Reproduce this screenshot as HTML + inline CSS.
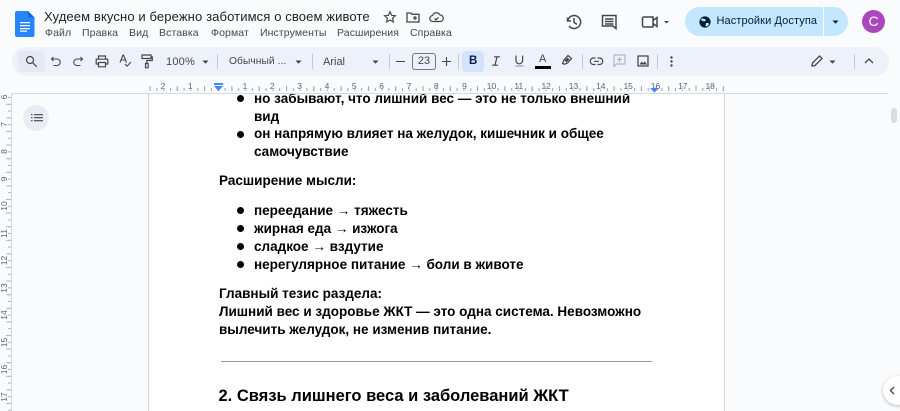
<!DOCTYPE html>
<html><head><meta charset="utf-8">
<style>
html,body{margin:0;padding:0;background:#f9fbfd}
#w{position:relative;width:900px;height:411px;overflow:hidden;background:#f9fbfd;font-family:"Liberation Sans",sans-serif}
.t{position:absolute;white-space:nowrap;line-height:1}
.m{font-size:10.5px;color:#444746;top:28px;letter-spacing:.1px}
.tb{font-size:11px;color:#444746;top:57px}
.d{font-size:13.52px;font-weight:bold;color:#000;left:219px}
.l{left:254px}
.b{position:absolute;left:237px;width:7px;height:7px;border-radius:50%;background:#000}
svg{position:absolute;overflow:visible}
.i{fill:none;stroke:#444746;stroke-width:1.4}
.f{fill:#444746}
.s{position:absolute;top:54px;width:1px;height:15px;background:#c7c7c7}
</style></head><body><div id="w">

<!-- docs logo -->
<svg style="left:15px;top:11px" width="20" height="26" viewBox="0 0 20 26">
<path d="M2 0H13L19.5 6.500V24a2 2 0 0 1-2 2H2a2 2 0 0 1-2-2V2a2 2 0 0 1 2-2z" fill="#2684fc"/>
<path d="M13 0L19.500 6.500H14a1 1 0 0 1-1-1z" fill="#1a66d8"/>
<path d="M5 11.500h10v1.300H5zM5 14.500h10v1.300H5zM5 17.500h10v1.300H5zM5 20h7v1.300H5z" fill="#fff" transform="translate(0,-.5)"/>
</svg>
<div class="t" style="left:44px;top:10px;font-size:13.05px;color:#1f1f1f;letter-spacing:.1px">Худеем вкусно и бережно заботимся о своем животе</div>
<svg style="left:383px;top:10px" width="14" height="14" viewBox="0 0 14 14"><path class="i" style="stroke-width:1.200" d="M7 1.800l1.600 3.500 3.800.4-2.800 2.500.8 3.700L7 10l-3.400 1.900.8-3.700L1.600 5.700l3.800-.4z"/></svg>
<svg style="left:406px;top:11px" width="14" height="12" viewBox="0 0 14 12"><path class="i" style="stroke-width:1.300" d="M1 2h4l1 1.300h7V11H1zM7 7h4M9 5v4"/></svg>
<svg style="left:429px;top:11px" width="15" height="12" viewBox="0 0 15 12"><path class="i" style="stroke-width:1.200" d="M4 10.500a3 3 0 0 1-.4-6A4 4 0 0 1 11 4a3.200 3.200 0 0 1 .2 6.500zM5.500 7.500l1.500 1.400 2.500-2.600"/></svg>
<div class="t m" style="left:45px">Файл</div>
<div class="t m" style="left:82px">Правка</div>
<div class="t m" style="left:129px">Вид</div>
<div class="t m" style="left:159px">Вставка</div>
<div class="t m" style="left:211px">Формат</div>
<div class="t m" style="left:260px">Инструменты</div>
<div class="t m" style="left:337px">Расширения</div>
<div class="t m" style="left:410px">Справка</div>

<!-- right header -->
<svg style="left:565px;top:13px" width="18" height="18" viewBox="0 0 18 18"><path class="i" style="stroke-width:1.500" d="M2.500 4.500V8h3.500M2.700 8A6.500 6.500 0 1 1 4 13M9 5v4.500l3 1.800"/></svg>
<svg style="left:601px;top:14px" width="17" height="17" viewBox="0 0 17 17"><path class="i" style="stroke-width:1.500" d="M1.500 1.500h13.500v13l-3-2.500H1.500zM4 5h8.500M4 7.500h8.500M4 10h8.500"/></svg>
<svg style="left:641px;top:15px" width="30" height="14" viewBox="0 0 30 14"><path class="i" style="stroke-width:1.500" d="M3 2h9v10H3a1.500 1.500 0 0 1-1.500-1.500v-7A1.500 1.500 0 0 1 3 2zM12 5.500l4-3v9l-4-3z"/><path class="f" d="M23 6h5l-2.500 2.500z"/></svg>
<div style="position:absolute;left:685px;top:7px;width:163px;height:29px;border-radius:15px;background:#c2e7ff"></div>
<div style="position:absolute;left:823px;top:7px;width:1px;height:29px;background:#f9fbfd"></div>
<svg style="left:699px;top:16px" width="12" height="12" viewBox="0 0 12 12"><circle cx="6" cy="6" r="5.600" fill="#001d35"/><path d="M3 2.500l3 .5 1 1.500-2 1-1-.5L1.500 4zM7 7l2.500 0 .5 1.500-2 2L6.500 10z" fill="#c2e7ff"/></svg>
<div class="t" style="left:716.500px;top:16px;font-size:11px;color:#001d35;letter-spacing:.1px">Настройки Доступа</div>
<svg style="left:832px;top:20px" width="8" height="5" viewBox="0 0 8 5"><path d="M.5.500h6L3.500 3.800z" fill="#001d35"/></svg>
<div style="position:absolute;left:862px;top:10px;width:23px;height:23px;border-radius:50%;background:#ab47bc;color:#fff;font-size:14px;line-height:23px;text-align:center">C</div>

<!-- toolbar -->
<div style="position:absolute;left:12px;top:47px;width:877px;height:29px;border-radius:15px;background:#edf2fa"></div>
<div style="position:absolute;left:18px;top:51px;width:27px;height:21px;background:#e4e9f3;border-radius:3px"></div>
<svg style="left:25px;top:55px" width="13" height="13" viewBox="0 0 13 13"><circle class="i" cx="5" cy="5" r="3.500" style="stroke-width:1.200"/><path class="i" d="M7.800 7.800l4 4" style="stroke-width:1.200"/></svg>
<svg style="left:50px;top:56px" width="12" height="12" viewBox="0 0 12 12"><path class="i" style="stroke-width:1.100" d="M3.500 1L1.500 3l2 2M1.500 3H7a3 3 0 0 1 0 6.500H3.500"/></svg>
<svg style="left:72px;top:56px" width="12" height="12" viewBox="0 0 12 12"><path class="i" style="stroke-width:1.100" d="M8.500 1l2 2-2 2M10.500 3H5a3 3 0 0 0 0 6.500h3.500"/></svg>
<svg style="left:95px;top:55px" width="14" height="13" viewBox="0 0 14 13"><path class="i" style="stroke-width:1.200" d="M3.500 4V1h7v3M3.500 9H1.200V4.200h11.600V9h-2.300M3.500 7.500h7v4.300h-7z"/></svg>
<svg style="left:119px;top:54px" width="13" height="14" viewBox="0 0 13 14"><path class="i" style="stroke-width:1.100" d="M1 8.500L4 1h.5l3 7.500M2 6h5M6 10l2 2.200 4-4.200"/></svg>
<svg style="left:141px;top:54px" width="12" height="15" viewBox="0 0 12 15"><path class="i" style="stroke-width:1.200" d="M1 1h9v3.500H1zM10 3h1.300v3.500H5.800v3M4.500 9.500h2.600v4.300H4.500z"/></svg>
<div class="t tb" style="left:166px;font-size:11px;letter-spacing:.2px">100%</div>
<svg style="left:202px;top:60px" width="8" height="5"><path class="f" d="M.5.500h6L3.500 3.800z"/></svg>
<div class="s" style="left:217px"></div>
<div class="t tb" style="left:229px;font-size:10.200px;letter-spacing:.1px">Обычный ...</div>
<svg style="left:295px;top:60px" width="8" height="5"><path class="f" d="M.5.500h6L3.500 3.800z"/></svg>
<div class="s" style="left:312px"></div>
<div class="t tb" style="left:323px;font-size:11px">Arial</div>
<svg style="left:372px;top:60px" width="8" height="5"><path class="f" d="M.5.500h6L3.500 3.800z"/></svg>
<div class="s" style="left:389px"></div>
<div style="position:absolute;left:396px;top:61px;width:9px;height:1px;background:#444746"></div>
<div style="position:absolute;left:412px;top:53px;width:24px;height:17px;box-sizing:border-box;border:1px solid #747775;border-radius:3px;color:#444746;font-size:11px;line-height:15px;text-align:center">23</div>
<svg style="left:442px;top:57px" width="9" height="9"><path d="M0 4.500h9M4.500 0v9" stroke="#444746" stroke-width="1.100"/></svg>
<div class="s" style="left:458px"></div>
<div style="position:absolute;left:462px;top:51px;width:22px;height:21px;border-radius:4px;background:#d3e3fd"></div>
<div class="t" style="left:469px;top:56px;font-size:11.500px;font-weight:bold;color:#041e49">B</div>
<svg style="left:492px;top:56px" width="8" height="10" viewBox="0 0 8 10"><path class="i" style="stroke-width:1.200" d="M2 .8h6M0 9.200h6M5 .8L3 9.200"/></svg>
<svg style="left:515px;top:55px" width="9" height="12" viewBox="0 0 9 12"><path class="i" style="stroke-width:1.200" d="M1 .5V5.500a3.300 3.300 0 0 0 6.600 0V.5"/><path d="M.5 11h8" stroke="#8a8c8f" stroke-width="1"/></svg>
<div class="t" style="left:539px;top:54px;font-size:11px;color:#444746">A</div>
<div style="position:absolute;left:535px;top:66px;width:16px;height:2.500px;background:#000"></div>
<svg style="left:561px;top:54px" width="13" height="12" viewBox="0 0 13 12"><path class="i" style="stroke-width:1.200" d="M1.500 9.500L3 6l4-4.500 3.500 3L6.500 9l-3 1.200z"/><path class="f" d="M3.500 6.500l3-3 2 2-3 3z"/></svg>
<div class="s" style="left:582px"></div>
<svg style="left:590px;top:57px" width="13" height="9" viewBox="0 0 13 9"><path class="i" style="stroke-width:1.200" d="M5.500 1H3.500a3 3 0 0 0 0 6.500h2M7.500 1h2a3 3 0 0 1 0 6.500h-2M4 4.300h5"/></svg>
<svg style="left:613px;top:54px" width="13" height="14" viewBox="0 0 13 14"><path d="M1 1h11v9H3.500L1 12.500zM6.500 3v5M4 5.500h5" fill="none" stroke="#b4b8bc" stroke-width="1.200"/></svg>
<svg style="left:637px;top:55px" width="12" height="12" viewBox="0 0 12 12"><path class="i" style="stroke-width:1.300" d="M1 1h10v10H1z"/><path class="f" d="M2.500 9.500l2.200-3 1.500 1.800 1.500-2 2.300 3.200z"/></svg>
<div class="s" style="left:657px"></div>
<svg style="left:670px;top:56px" width="3" height="11"><circle class="f" cx="1.500" cy="1.500" r="1.200"/><circle class="f" cx="1.500" cy="5.500" r="1.200"/><circle class="f" cx="1.500" cy="9.500" r="1.200"/></svg>
<svg style="left:811px;top:55px" width="12" height="12" viewBox="0 0 12 12"><path class="i" style="stroke-width:1.300" d="M1 11l.5-3L8.500 1l2.500 2.500L4 10.500z"/></svg>
<svg style="left:829px;top:60px" width="8" height="5"><path class="f" d="M.5.500h6L3.500 3.800z"/></svg>
<div class="s" style="left:854px"></div>
<svg style="left:864px;top:58px" width="10" height="6"><path class="i" style="stroke-width:1.300" d="M1 5l4-4 4 4"/></svg>

<!-- page -->
<div style="position:absolute;left:148px;top:93px;width:577px;height:318px;background:#fff;border-left:1px solid #d0d1d3;border-right:1.500px solid #d5d7da;box-sizing:border-box"></div>

<!-- horizontal ruler -->
<svg style="left:0;top:0" width="900" height="411">
<defs>
<pattern id="hr" x="149.500" y="0" width="6.825" height="411" patternUnits="userSpaceOnUse"><rect x="0" y="88" width="1" height="3" fill="#a0a3a6"/></pattern>
<pattern id="hr2" x="149.500" y="0" width="13.650" height="411" patternUnits="userSpaceOnUse"><rect x="0" y="86" width="1" height="5" fill="#a0a3a6"/></pattern>
<pattern id="vr" x="0" y="97" width="411" height="6.800" patternUnits="userSpaceOnUse"><rect x="8" y="0" width="3" height="1" fill="#b4b6b9"/></pattern>
<pattern id="vr2" x="0" y="103.800" width="411" height="13.600" patternUnits="userSpaceOnUse"><rect x="6" y="0" width="5" height="1" fill="#b4b6b9"/></pattern>
</defs>
<rect x="149" y="84" width="576" height="8" fill="url(#hr)"/>
<rect x="149" y="84" width="576" height="8" fill="url(#hr2)"/>
<rect x="0" y="94" width="12" height="317" fill="url(#vr)"/>
<rect x="0" y="94" width="12" height="317" fill="url(#vr2)"/>
<rect x="11" y="93" width="877" height="1" fill="#d5d8dc"/>
<rect x="11" y="93" width="1" height="318" fill="#d5d8dc"/>
<g font-family="Liberation Sans, sans-serif" font-size="8.500" fill="#5f6368" text-anchor="middle" style="paint-order:stroke" stroke="#f9fbfd" stroke-width="1.500">
<text x="163" y="89">2</text><text x="190.300" y="89">1</text><text x="245" y="89">1</text><text x="272.300" y="89">2</text><text x="299.600" y="89">3</text><text x="327" y="89">4</text><text x="354.300" y="89">5</text><text x="381.600" y="89">6</text><text x="409" y="89">7</text><text x="436.300" y="89">8</text><text x="464.500" y="89">9</text><text x="491.500" y="89">10</text><text x="518.800" y="89">11</text><text x="546.200" y="89">12</text><text x="573.500" y="89">13</text><text x="600.800" y="89">14</text><text x="628.200" y="89">15</text><text x="655.500" y="89">16</text><text x="682.800" y="89">17</text><text x="710.200" y="89">18</text>
</g>
<path d="M214 83h9v2h-9zM214 86h9l-4.500 5z" fill="#4285f4"/>
<path d="M650 88h9l-4.500 4.500z" fill="#4285f4"/>
<g font-family="Liberation Sans, sans-serif" font-size="8.500" fill="#5f6368" text-anchor="middle" style="paint-order:stroke" stroke="#f9fbfd" stroke-width="1.500">
<text transform="translate(7,97) rotate(-90)">6</text><text transform="translate(7,124.500) rotate(-90)">7</text><text transform="translate(7,151.500) rotate(-90)">8</text><text transform="translate(7,179) rotate(-90)">9</text><text transform="translate(7,206) rotate(-90)">10</text><text transform="translate(7,233.500) rotate(-90)">11</text><text transform="translate(7,260.500) rotate(-90)">12</text><text transform="translate(7,288) rotate(-90)">13</text><text transform="translate(7,315) rotate(-90)">14</text><text transform="translate(7,342.500) rotate(-90)">15</text><text transform="translate(7,369.500) rotate(-90)">16</text><text transform="translate(7,397) rotate(-90)">17</text>
</g>
</svg>

<!-- outline button -->
<div style="position:absolute;left:23px;top:105px;width:26px;height:26px;border-radius:50%;background:#e8edf4"></div>
<svg style="left:31px;top:114px" width="12" height="8"><path d="M0 .7h1.500M3 .7h9M0 3.700h1.500M3 3.700h9M0 6.700h1.500M3 6.700h9" stroke="#444746" stroke-width="1.100"/></svg>

<!-- document text (clipped at top) -->
<div style="position:absolute;left:0;top:94px;width:900px;height:317px;overflow:hidden">
<div style="position:absolute;left:0;top:-94px;width:900px;height:411px">
<div class="b" style="top:95px"></div>
<div class="t d l" style="top:92px">но забывают, что лишний вес — это не только внешний</div>
<div class="t d l" style="top:110px">вид</div>
<div class="b" style="top:131px"></div>
<div class="t d l" style="top:127px">он напрямую влияет на желудок, кишечник и общее</div>
<div class="t d l" style="top:145px">самочувствие</div>
<div class="t d" style="top:174px">Расширение мысли:</div>
<div class="b" style="top:207px"></div>
<div class="t d l" style="top:204px">переедание → тяжесть</div>
<div class="b" style="top:225px"></div>
<div class="t d l" style="top:222px">жирная еда → изжога</div>
<div class="b" style="top:243px"></div>
<div class="t d l" style="top:240px">сладкое → вздутие</div>
<div class="b" style="top:261px"></div>
<div class="t d l" style="top:258px">нерегулярное питание → боли в животе</div>
<div class="t d" style="top:287px">Главный тезис раздела:</div>
<div class="t d" style="top:305px">Лишний вес и здоровье ЖКТ — это одна система. Невозможно</div>
<div class="t d" style="top:323px">вылечить желудок, не изменив питание.</div>
<div style="position:absolute;left:221px;top:361px;width:431px;height:1px;background:#9a9a9a"></div>
<div class="t" style="left:218.500px;top:388px;font-size:16.500px;font-weight:bold;color:#000">2. Связь лишнего веса и заболеваний ЖКТ</div>
</div></div>

<!-- scrollbar -->
<div style="position:absolute;left:891px;top:108px;width:6px;height:15px;border-radius:3px;background:#dadce0"></div>
<!-- side panel toggle -->
<div style="position:absolute;left:883px;top:376px;width:30px;height:29px;border-radius:50%;background:#fff;box-shadow:0 1px 3px rgba(60,64,67,.35)"></div>
<svg style="left:889px;top:386px" width="6" height="9"><path d="M5 1L1.500 4.500 5 8" fill="none" stroke="#444746" stroke-width="1.400"/></svg>
</div></body></html>
